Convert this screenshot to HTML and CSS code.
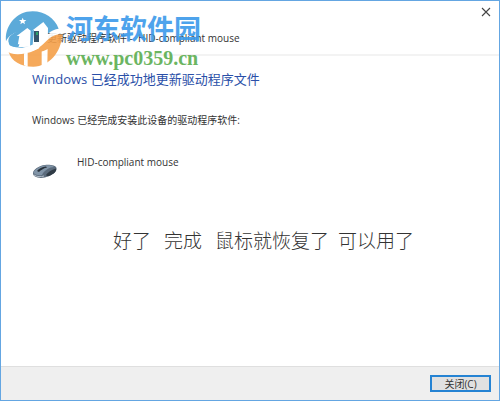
FILE: index.html
```html
<!DOCTYPE html>
<html lang="zh-CN">
<head>
    <meta charset="UTF-8">
    <meta name="viewport" content="width=device-width, initial-scale=1.0">
    <title>更新驱动程序软件 - HID-compliant mouse</title>
    <link rel="stylesheet" href="styles.css">
</head>
<body>
    <div class="window">
        <header>
            <div class="titlebar">
                <button class="closeBtn" aria-label="关闭">
                    <svg width="10" height="10" viewBox="0 0 10 10"><path d="M1 1L9 9M9 1L1 9" stroke="#444" stroke-width="1.1"/></svg>
                </button>
            </div>
            <div class="caption">
                <svg class="deviceIcon" width="8" height="12" viewBox="0 0 8 12"><rect x="1" width="5" height="11" fill="#36556a"/><rect x="3" y="1" width="2" height="3" fill="#2fa36b"/></svg>
                <span>更新驱动程序软件 - &nbsp;HID-compliant mouse</span>
            </div>
        </header>

        <main>
            <h1>Windows 已经成功地更新驱动程序文件</h1>
            <p class="intro">Windows 已经完成安装此设备的驱动程序软件:</p>
            <div class="device">
                <svg width="26" height="15" viewBox="0 0 26 15">
                    <path d="M1 9C1 6 7 1.500 13 1C18 .4 24 1.500 24.500 4C25 7 22 10 17 12C12 14.500 6 14.500 3 12.500C1.500 11.500 1 10.500 1 9Z" fill="#5b6b7c"/>
                    <path d="M1.500 8.500C3 5 8 2 13 1.500C17 1 21 1.500 22 3C18 3 12 6.500 10 11C6 11.500 2.500 11 1.500 8.500Z" fill="#8194a7"/>
                    <path d="M5 7C7 4.500 10 3 14 2.500L15 3.500C11 4.500 9 6 7 8Z" fill="#27313b"/>
                    <path d="M14 11C16 8 19 6 24 4.500C25 7 22 10 17 12C16 12.500 15 12.500 14 11Z" fill="#303b46"/>
                    <path d="M2 11C5 13 9 13 12 12" stroke="#b4bfca" fill="none"/>
                </svg>
                <span>HID-compliant mouse</span>
            </div>
            <p class="note"><span>好了</span><span>完成</span><span>鼠标就恢复了</span><span>可以用了</span></p>
        </main>

        <footer>
            <button class="doneBtn">关闭(C)</button>
        </footer>

        <div class="watermark">
            <svg width="64" height="62" viewBox="0 0 192 186">
                <path d="M13 106C4 62 38 10 92 10C128 10 158 30 170 62C148 64 130 84 112 98C84 120 40 128 13 106Z" fill="#4ba1d5"/>
                <path d="M20 132C60 142 104 130 132 104C148 88 160 78 180 80C178 134 142 174 94 176C56 176 28 160 20 132Z" fill="#f5a04a"/>
                <path d="M44 72C22 84 14 104 26 116C46 130 96 116 126 88L142 96C112 130 58 146 26 136C2 126 2 88 44 72Z" fill="#fff"/>
                <path d="M46 118L52 84L44 84L76 60L86 68L84 116Z" fill="#fff"/>
                <path d="M92 110L96 66L90 68L124 42L138 60L136 172L119 176V104Z" fill="#fff"/>
                <path d="M66 136L77 134V176L66 172Z" fill="#fff"/>
                <path d="M26 110C12 100 20 80 44 72C30 86 26 96 34 104C38 110 46 110 52 108L50 116C40 118 32 116 26 110Z" fill="#4ba1d5"/>
                <path d="M118 100C132 84 148 62 182 74C156 80 148 98 126 114Z" fill="#fff"/>
                <path d="M112 118C136 100 148 76 180 80C170 102 148 124 112 132Z" fill="#f5a04a"/>
                <path d="M62 29L65 36L73 36L67 41L69 49L62 44L55 49L57 41L51 36L59 36Z" fill="#fff"/>
            </svg>
            <div class="siteText">
                <div class="siteName">河东软件园</div>
                <div class="siteUrl">www.pc0359.cn</div>
            </div>
        </div>
    </div>
</body>
</html>
```

FILE: styles.css
```css
* {
    box-sizing: border-box;
}
body {
    margin: 0;
    font-family: "Open Sans", "Noto Sans CJK SC", sans-serif;
    font-size: 10px;
    color: #333;
    background-color: #fff;
}
h1, p {
    margin: 0;
    font-weight: normal;
}
button {
    font-family: inherit;
    padding: 0;
    cursor: pointer;
}
.window {
    position: relative;
    display: flex;
    flex-direction: column;
    min-height: 100vh;
    border: 1px solid #64a6e2;
}
header {
    border-bottom: 2px solid #f3f3f3;
}
.titlebar {
    display: flex;
    justify-content: flex-end;
    padding: 3px 5px 0;
}
.closeBtn {
    display: flex;
    align-items: center;
    justify-content: center;
    width: 16px;
    height: 16px;
    border: none;
    background: none;
}
.caption {
    display: flex;
    align-items: center;
    gap: 6px;
    height: 34px;
    padding-left: 32px;
}
.deviceIcon {
    position: relative;
    z-index: 1;
}
main {
    flex: 1;
    padding: 13px 31px;
}
h1 {
    font-size: 13px;
    line-height: 20px;
    color: #2a4fa8;
}
.intro {
    margin-top: 21px;
    line-height: 20px;
}
.device {
    display: flex;
    align-items: flex-start;
    gap: 19px;
    margin-top: 22px;
    line-height: 20px;
}
.device svg {
    margin-top: 12px;
}
.note {
    display: flex;
    margin-top: 49px;
    padding-left: 81px;
    gap: 13px;
    font-family: "Noto Sans CJK SC", sans-serif;
    font-size: 19px;
    font-weight: 300;
    line-height: 24px;
}
.note span:last-child {
    margin-left: -4px;
}
footer {
    display: flex;
    justify-content: flex-end;
    padding: 8px;
    background-color: #efefef;
    border-top: 1px solid #dfdfdf;
}
.doneBtn {
    width: 61px;
    height: 17px;
    border: 2px solid #2583d3;
    background-color: #e1e1e1;
    color: #333;
    font-size: 10px;
    line-height: 12px;
}
.watermark {
    position: absolute;
    top: 7px;
    left: 1px;
    display: flex;
    opacity: 0.9;
    pointer-events: none;
}
.siteName {
    font-family: "Noto Sans CJK SC", sans-serif;
    font-size: 27px;
    font-weight: bold;
    line-height: 40px;
    color: #3b9aea;
}
.siteUrl {
    font-family: "Liberation Serif", serif;
    font-size: 20px;
    font-weight: bold;
    line-height: 20px;
    color: #5cae50;
}
```
